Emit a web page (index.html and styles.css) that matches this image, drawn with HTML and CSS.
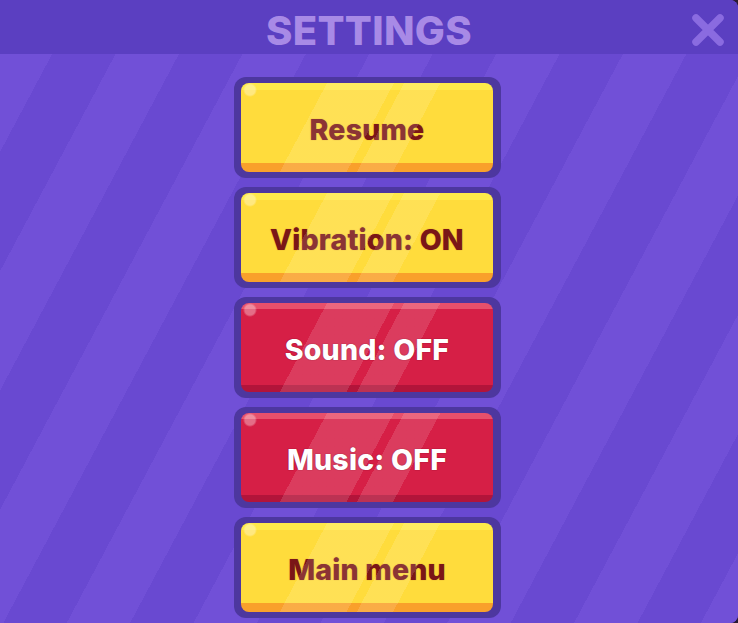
FILE: index.html
```html
<!DOCTYPE html>
<html lang="en">
<head>
<meta charset="utf-8">
<title>Settings</title>
<link rel="stylesheet" href="styles.css">
</head>
<body>
<div class="panel">
  <header class="header">
    <h1 class="title">SETTINGS</h1>
    <button class="close" aria-label="Close">
      <svg width="34" height="34" viewBox="0 0 34 34">
        <path d="M5 5 L29 29 M29 5 L5 29" stroke="#8a6be0" stroke-width="7.5" stroke-linecap="round" fill="none"/>
      </svg>
    </button>
  </header>
  <main class="content">
    <div class="frame"><button class="btn yellow">Resume</button></div>
    <div class="frame"><button class="btn yellow">Vibration: ON</button></div>
    <div class="frame"><button class="btn red">Sound: OFF</button></div>
    <div class="frame"><button class="btn red">Music: OFF</button></div>
    <div class="frame"><button class="btn yellow">Main menu</button></div>
  </main>
</div>
</body>
</html>
```
FILE: styles.css
```css
html, body {
  margin: 0;
  padding: 0;
  background: #2a1a34;
}
body {
  width: 738px;
  height: 623px;
  overflow: hidden;
  font-family: Inter, "Open Sans", "Liberation Sans", sans-serif;
}
.panel {
  width: 738px;
  height: 623px;
  display: flex;
  flex-direction: column;
  border-radius: 0 8px 8px 0;
  overflow: hidden;
  background: #6a4ad1;
}
.header {
  height: 54px;
  flex: none;
  background: #5b3fc1;
  display: flex;
  align-items: center;
  justify-content: center;
  position: relative;
}
.title {
  margin: 0;
  font-size: 40px;
  font-weight: 800;
  color: #a88ae6;
  letter-spacing: 0.3px;
  line-height: 1;
  padding-top: 7px;
}
.close {
  position: absolute;
  right: 13px;
  top: 13px;
  width: 34px;
  height: 34px;
  padding: 0;
  border: 0;
  background: none;
  display: block;
}
.close svg { display: block; }
.content {
  flex: 1;
  display: flex;
  flex-direction: column;
  align-items: center;
  gap: 9px;
  padding-top: 23px;
  padding-right: 3px;
  background: repeating-linear-gradient(118deg,
    #7150d7 0 46px,
    #6949d1 46px 102px,
    #7150d7 102px 112px);
}
.frame {
  width: 252px;
  height: 89px;
  padding: 6px 8px 6px 7px;
  background: #4d379f;
  border-radius: 12px;
  flex: none;
}
.btn {
  position: relative;
  display: flex;
  align-items: center;
  justify-content: center;
  width: 252px;
  height: 89px;
  border: 0;
  padding: 3px 0 0;
  border-radius: 8px;
  font-family: inherit;
  font-size: 28.5px;
  font-weight: 800;
  letter-spacing: 0.2px;
  overflow: hidden;
}
.btn::before {
  content: "";
  position: absolute;
  inset: 0;
  background: linear-gradient(118deg,
    transparent 0 76px,
    rgba(255,255,255,0.13) 76px 135px,
    transparent 135px 144px,
    rgba(255,255,255,0.13) 144px 176px,
    transparent 176px);
  pointer-events: none;
}
.btn::after {
  content: "";
  position: absolute;
  left: 0;
  top: 0;
  width: 22px;
  height: 18px;
  background: radial-gradient(circle at 9px 7px, rgba(255,255,255,0.35) 0 5px, rgba(255,255,255,0) 7px);
  pointer-events: none;
}
.yellow {
  color: #7a1617;
  background: linear-gradient(to bottom,
    #ffea4a 0 7px,
    #ffdc3c 7px calc(100% - 9px),
    #f9a02b calc(100% - 9px));
  text-shadow: 0 0 1px rgba(122,22,23,0.5);
}
.red {
  color: #ffffff;
  background: linear-gradient(to bottom,
    #e8506b 0 6px,
    #d61f46 6px calc(100% - 7px),
    #b2143a calc(100% - 7px));
  text-shadow: 0 0 1px #8c0d2a, 0 0 1px #8c0d2a;
}
```
